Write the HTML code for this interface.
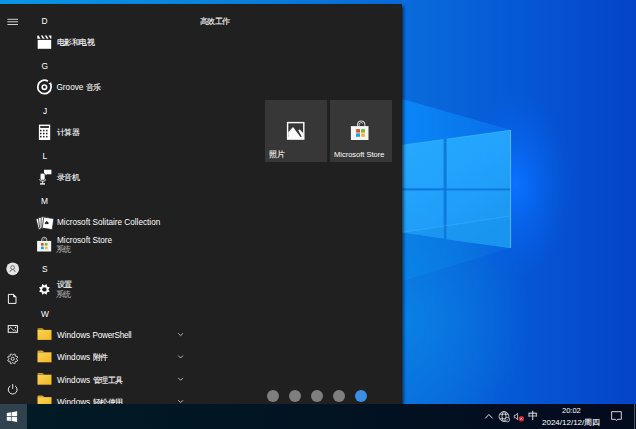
<!DOCTYPE html>
<html><head><meta charset="utf-8">
<style>
*{margin:0;padding:0;box-sizing:border-box}
html,body{width:636px;height:429px;overflow:hidden;background:#0a5ad4}
body{position:relative;font-family:"Liberation Sans",sans-serif;color:#fff}
.abs{position:absolute}
#wall{position:absolute;left:0;top:0;width:636px;height:404px}
#menu{position:absolute;left:0;top:4px;width:402px;height:400px;background:#202020;box-shadow:1.5px 1.5px 3px rgba(0,12,30,0.75)}
.t{position:absolute;white-space:nowrap;font-size:8.2px;line-height:10px;color:#fff}
.h{position:absolute;white-space:nowrap;font-size:8.4px;line-height:10px;color:#fff}
.c{font-size:8px;letter-spacing:-0.4px;-webkit-text-stroke:0.1px currentColor}
.sub{color:#a8a8a8}
.tile{position:absolute;background:#373737;width:63px;height:62px;top:99.5px}
.dot{position:absolute;width:12px;height:12px;border-radius:50%;background:#7f7f7f;top:390px}
#taskbar{position:absolute;left:0;top:404px;width:636px;height:25px;background:linear-gradient(to right,#011b26,#030b1e)}
svg{position:absolute;overflow:visible}
</style></head><body>

<svg id="wall" width="636" height="404" viewBox="0 0 636 404">
  <defs>
    <linearGradient id="bg" x1="402" y1="0" x2="636" y2="0" gradientUnits="userSpaceOnUse">
      <stop offset="0" stop-color="#0a6cdc"/>
      <stop offset="0.45" stop-color="#065ad6"/>
      <stop offset="1" stop-color="#0544c8"/>
    </linearGradient>
    <linearGradient id="strip" x1="0" y1="0" x2="402" y2="0" gradientUnits="userSpaceOnUse">
      <stop offset="0" stop-color="#0a96e4"/>
      <stop offset="0.6" stop-color="#0a80dc"/>
      <stop offset="1" stop-color="#0868d8"/>
    </linearGradient>
    <radialGradient id="leftlight" cx="400" cy="320" r="130" gradientUnits="userSpaceOnUse">
      <stop offset="0" stop-color="#0a84e6" stop-opacity="0.85"/>
      <stop offset="1" stop-color="#0a84e6" stop-opacity="0"/>
    </radialGradient>
    <radialGradient id="glow" cx="0" cy="0" r="1" gradientUnits="userSpaceOnUse" gradientTransform="translate(516 185) scale(55 95)">
      <stop offset="0" stop-color="#0a72ff" stop-opacity="1"/>
      <stop offset="0.4" stop-color="#0868f4" stop-opacity="0.7"/>
      <stop offset="1" stop-color="#0560e8" stop-opacity="0"/>
    </radialGradient>
    <linearGradient id="beamU" x1="402" y1="0" x2="511" y2="0" gradientUnits="userSpaceOnUse">
      <stop offset="0" stop-color="#0a8cff" stop-opacity="0.8"/>
      <stop offset="1" stop-color="#0a8cff" stop-opacity="0.35"/>
    </linearGradient>
    <linearGradient id="beamL" x1="402" y1="0" x2="511" y2="0" gradientUnits="userSpaceOnUse">
      <stop offset="0" stop-color="#0a8aea" stop-opacity="0.55"/>
      <stop offset="1" stop-color="#0a8aea" stop-opacity="0.15"/>
    </linearGradient>
    <linearGradient id="pane" x1="402" y1="130" x2="470" y2="250" gradientUnits="userSpaceOnUse">
      <stop offset="0" stop-color="#28aafe"/>
      <stop offset="0.5" stop-color="#22a2fc"/>
      <stop offset="1" stop-color="#1c96f2"/>
    </linearGradient>
  </defs>
  <rect x="0" y="0" width="636" height="404" fill="url(#bg)"/>
  <rect x="0" y="0" width="402" height="4" fill="url(#strip)"/>
  <rect x="402" y="0" width="234" height="404" fill="url(#leftlight)"/>
  <rect x="402" y="0" width="234" height="404" fill="url(#glow)"/>
  <polygon points="402,99 510.6,130 402,145" fill="url(#beamU)"/>
  <polygon points="402,232.6 510.3,248 402,281" fill="url(#beamL)"/>
  <polygon points="402,145 510.6,130 510.6,248 402,232.6" fill="#0e7ade"/>
  <polygon points="402,145 443.6,139.3 443.6,188.2 402,188.2" fill="url(#pane)"/>
  <polygon points="446.6,138.9 510.6,130 510.6,188.6 446.6,188.6" fill="url(#pane)"/>
  <polygon points="402,190.6 443.6,190.6 443.6,238.6 402,232.6" fill="url(#pane)"/>
  <polygon points="446.6,190.6 510.6,190.6 510.6,248 446.6,239.2" fill="url(#pane)"/>
  <polygon points="402,232.6 443.6,226.2 443.6,238.6" fill="#1894ee" opacity="0.7"/>
  <polygon points="446.6,225.7 510.6,215.9 510.6,248 446.6,239.2" fill="#1894ee" opacity="0.6"/>
  <line x1="402" y1="232.4" x2="510.6" y2="215.9" stroke="#3cb8ff" stroke-width="0.8" opacity="0.6"/>
  <polyline points="510.6,130 510.6,248" stroke="#7fd6ff" stroke-width="1" fill="none" opacity="0.6"/>
  <line x1="446.6" y1="139" x2="510.6" y2="130.2" stroke="#5cc8ff" stroke-width="0.7" opacity="0.5"/>
  <line x1="402" y1="145" x2="443.6" y2="139.4" stroke="#5cc8ff" stroke-width="0.7" opacity="0.4"/>
</svg>

<div id="menu"></div>
<div class="tile" style="left:264.5px;width:62.7px"></div>
<div class="tile" style="left:329.5px;width:62.5px"></div>

<!-- all icons in one page-coordinate svg -->
<svg class="abs" style="left:0;top:0" width="636" height="429" viewBox="0 0 636 429">
  <!-- hamburger -->
  <g stroke="#f0f0f0" stroke-width="0.85">
    <line x1="7.4" y1="19.3" x2="18" y2="19.3"/>
    <line x1="7.4" y1="21.8" x2="18" y2="21.8"/>
    <line x1="7.4" y1="24.5" x2="18" y2="24.5"/>
  </g>
  <!-- film -->
  <rect x="37.7" y="39.9" width="13.5" height="8.9" fill="#fff"/>
  <g fill="#fff">
    <polygon points="37.3,35.4 38.6,35.4 40.6,38.8 37.3,38.8"/>
    <polygon points="40.8,35.4 42.6,35.4 44.6,38.8 42.8,38.8"/>
    <polygon points="44.7,35.4 46.5,35.4 48.5,38.8 46.7,38.8"/>
    <polygon points="48.6,35.4 51.4,35.4 51.4,38.8 50.6,38.8"/>
  </g>
  <!-- groove -->
  <path d="M 47.9 81.2 A 6.7 6.7 0 1 0 50.6 84.2" stroke="#fff" stroke-width="1.7" fill="none"/>
  <polygon points="48.4,83.6 51.2,82.2 51.6,85.6" fill="#fff"/>
  <circle cx="44.4" cy="87.2" r="2.2" stroke="#fff" stroke-width="1.6" fill="none"/>
  <!-- calculator -->
  <rect x="38.9" y="124.6" width="11.3" height="15.4" fill="#fff"/>
  <rect x="40.2" y="126.1" width="8.7" height="1.8" fill="#202020"/>
  <g fill="#202020">
    <rect x="40" y="129.8" width="1.5" height="1.5"/><rect x="43" y="129.8" width="1.5" height="1.5"/><rect x="46" y="129.8" width="1.5" height="1.5"/>
    <rect x="40" y="132.8" width="1.5" height="1.5"/><rect x="43" y="132.8" width="1.5" height="1.5"/><rect x="46" y="132.8" width="1.5" height="1.5"/>
    <rect x="40" y="135.9" width="1.5" height="1.5"/><rect x="43" y="135.9" width="1.5" height="1.5"/><rect x="46" y="135.9" width="1.5" height="1.5"/>
  </g>
  <!-- voice recorder -->
  <path d="M44 169.8 H51.4 V174.2 H46.8 L45.6 175.4 V174.2 H44 Z" fill="#fff"/>
  <rect x="40.2" y="173.2" width="4.8" height="7" rx="1.6" fill="#fff" stroke="#202020" stroke-width="0.6"/>
  <path d="M39.6 179.2 Q39.6 181.4 42.6 181.4 Q45.6 181.4 45.6 179.2" stroke="#fff" stroke-width="0.8" fill="none"/>
  <rect x="42.2" y="181.2" width="0.9" height="2.2" fill="#fff"/>
  <rect x="40" y="183.2" width="5" height="1.4" fill="#fff"/>
  <!-- solitaire -->
  <g stroke="#202020" stroke-width="0.75" fill="#fff" stroke-linejoin="round">
    <rect x="40" y="217.4" width="7.6" height="11" rx="0.8" transform="rotate(-15 44 234)"/>
    <rect x="40.4" y="217.1" width="7.6" height="11" rx="0.8" transform="rotate(-7 44 234)"/>
    <rect x="40.9" y="216.9" width="7.6" height="11" rx="0.8" transform="rotate(1 44 234)"/>
    <rect x="41.4" y="217.3" width="10.2" height="11.2" rx="0.8" transform="rotate(8 44 234)"/>
  </g>
  <path d="M46.8 220.9 C45.6 222.1 44.4 222.5 45 223.7 C45.5 224.5 46.4 224.1 46.8 223.7 C47.2 224.1 48.1 224.5 48.6 223.7 C49.2 222.5 48 222.1 46.8 220.9 Z" fill="#202020"/>
  <!-- store (list) -->
  <g>
    <path d="M41.6 241.2 V239.8 A2.6 2.6 0 0 1 46.8 239.8 V241.2" stroke="#c4c4c4" stroke-width="0.9" fill="none"/>
    <path d="M43 240.6 A1.5 1.5 0 0 1 45.6 239.2" stroke="#c4c4c4" stroke-width="0.7" fill="none"/>
    <rect x="37.1" y="240.9" width="14.1" height="10.6" fill="#f4f4f4"/>
    <rect x="41" y="243" width="2.7" height="2.6" fill="#e4502c"/>
    <rect x="44.8" y="243" width="2.7" height="2.6" fill="#7cb42a"/>
    <rect x="41" y="246.6" width="2.7" height="2.6" fill="#14a0e4"/>
    <rect x="44.8" y="246.6" width="2.7" height="2.6" fill="#f4b92a"/>
  </g>
  <!-- settings gear (list) -->
  <polygon fill="#fff" points="46.62,284.04 47.16,286.64 49.76,287.18 48.30,289.40 49.76,291.62 47.16,292.16 46.62,294.76 44.40,293.30 42.18,294.76 41.64,292.16 39.04,291.62 40.50,289.40 39.04,287.18 41.64,286.64 42.18,284.04 44.40,285.50"/>
  <circle cx="44.4" cy="289.4" r="2.2" fill="#202020"/>
  <!-- folders -->
  <g><defs><linearGradient id="fold" x1="0" y1="0" x2="1" y2="1"><stop offset="0" stop-color="#fbd45a"/><stop offset="1" stop-color="#f2b820"/></linearGradient></defs><path d="M37.5 329.1 Q37.5 328.2 38.4 328.2 H42.2 Q42.8 328.2 43.3 328.8 L44.2 329.8 H37.5 Z" fill="#dca226"/><rect x="37.5" y="329.9" width="14" height="10" fill="url(#fold)"/><path d="M37.5 351.5 Q37.5 350.6 38.4 350.6 H42.2 Q42.8 350.6 43.3 351.2 L44.2 352.2 H37.5 Z" fill="#dca226"/><rect x="37.5" y="352.3" width="14" height="10" fill="url(#fold)"/><path d="M37.5 373.9 Q37.5 373.0 38.4 373.0 H42.2 Q42.8 373.0 43.3 373.6 L44.2 374.6 H37.5 Z" fill="#dca226"/><rect x="37.5" y="374.7" width="14" height="10" fill="url(#fold)"/><path d="M37.5 396.3 Q37.5 395.4 38.4 395.4 H42.2 Q42.8 395.4 43.3 396.0 L44.2 397.0 H37.5 Z" fill="#dca226"/><rect x="37.5" y="397.1" width="14" height="10" fill="url(#fold)"/></g>
  <!-- chevrons -->
  <g stroke="#c8c8c8" stroke-width="0.9" fill="none">
    <polyline points="178.2,333.3 180.6,335.7 183,333.3"/>
    <polyline points="178.2,355.6 180.6,358 183,355.6"/>
    <polyline points="178.2,377.9 180.6,380.3 183,377.9"/>
    <polyline points="178.2,400.2 180.6,402.6 183,400.2"/>
  </g>
  <!-- rail: avatar -->
  <circle cx="12.7" cy="268.8" r="6.4" fill="#e4e4e4"/>
  <circle cx="12.6" cy="267.5" r="1.9" stroke="#555" stroke-width="0.75" fill="none"/>
  <path d="M9.9 272 Q10.4 269.6 12.6 269.6 Q14.8 269.6 15.3 272" stroke="#555" stroke-width="0.75" fill="none"/>
  <!-- rail: document -->
  <path d="M8.4 294.4 H13.5 L16 296.9 V303.4 H8.4 Z" stroke="#fff" stroke-width="0.95" fill="none" stroke-linejoin="miter"/>
  <path d="M13.5 294.4 V296.9 H16 Z" stroke="#fff" stroke-width="0.6" fill="#fff"/>
  <!-- rail: picture -->
  <rect x="8.2" y="325.6" width="9.2" height="6.7" stroke="#fff" stroke-width="0.95" fill="none"/>
  <polyline points="8.4,329.8 10.6,327.5 13.9,330.6" stroke="#fff" stroke-width="0.8" fill="none"/>
  <polyline points="14.2,329.3 16.2,331.6" stroke="#fff" stroke-width="0.8" fill="none"/>
  <circle cx="15.5" cy="327.4" r="0.6" fill="#fff"/>
  <!-- rail: gear -->
  <path stroke="#fff" stroke-width="0.9" fill="none" d="M16.45 358.80 L16.65 359.19 L17.11 359.68 L17.51 360.26 L17.55 360.81 L17.14 361.17 L16.44 361.30 L15.77 361.32 L15.35 361.45 L15.22 361.87 L15.20 362.54 L15.07 363.24 L14.71 363.65 L14.16 363.61 L13.58 363.21 L13.09 362.75 L12.70 362.55 L12.31 362.75 L11.82 363.21 L11.24 363.61 L10.69 363.65 L10.33 363.24 L10.20 362.54 L10.18 361.87 L10.05 361.45 L9.63 361.32 L8.96 361.30 L8.26 361.17 L7.85 360.81 L7.89 360.26 L8.29 359.68 L8.75 359.19 L8.95 358.80 L8.75 358.41 L8.29 357.92 L7.89 357.34 L7.85 356.79 L8.26 356.43 L8.96 356.30 L9.63 356.28 L10.05 356.15 L10.18 355.73 L10.20 355.06 L10.33 354.36 L10.69 353.95 L11.24 353.99 L11.82 354.39 L12.31 354.85 L12.70 355.05 L13.09 354.85 L13.58 354.39 L14.16 353.99 L14.71 353.95 L15.07 354.36 L15.20 355.06 L15.22 355.73 L15.35 356.15 L15.77 356.28 L16.44 356.30 L17.14 356.43 L17.55 356.79 L17.51 357.34 L17.11 357.92 L16.65 358.41 L16.45 358.80 Z"/>
  <circle cx="12.7" cy="358.8" r="1.6" stroke="#fff" stroke-width="0.8" fill="none"/>
  <!-- rail: power -->
  <path d="M10.3 385.9 A4.4 4.4 0 1 0 15.1 385.9" stroke="#fff" stroke-width="0.9" fill="none"/>
  <line x1="12.7" y1="384.1" x2="12.7" y2="388.9" stroke="#fff" stroke-width="0.9"/>
  <!-- photo tile icon -->
  <rect x="286.9" y="121.9" width="17.6" height="17.9" fill="#fff"/>
  <rect x="288.3" y="123.3" width="14.8" height="13.6" fill="#373737"/>
  <polygon points="288.3,132.2 293,126.9 300.4,136.9 288.3,136.9" fill="#fff"/>
  <polygon points="298.4,130.5 299.5,129.2 303.1,133 303.1,136.9 301.9,136.9" fill="#fff"/>
  <!-- store tile icon -->
  <g>
    <path d="M357.6 126.5 V124.6 A3.6 3.6 0 0 1 364.8 124.6 V126.5" stroke="#d0d0d0" stroke-width="1.1" fill="none"/>
    <path d="M359.4 125.8 A2 2 0 0 1 363 123.6" stroke="#d0d0d0" stroke-width="0.9" fill="none"/>
    <rect x="350.9" y="126.1" width="17.6" height="13.9" fill="#f6f6f6"/>
    <rect x="356.1" y="129.1" width="3.9" height="3.5" fill="#e4502c"/>
    <rect x="361.1" y="129.1" width="3.8" height="3.5" fill="#7cb42a"/>
    <rect x="356.1" y="133.4" width="3.9" height="3.4" fill="#14a0e4"/>
    <rect x="361.1" y="133.4" width="3.8" height="3.4" fill="#f4b92a"/>
  </g>
</svg>

<!-- list headers & items: absolute page coordinates -->
<div class="h" style="left:41.5px;top:16px">D</div>
<div class="t c" style="left:56.5px;top:37.5px">电影和电视</div>
<div class="h" style="left:41.5px;top:61px">G</div>
<div class="t" style="left:56.5px;top:83px">Groove <span class="c">音乐</span></div>
<div class="h" style="left:43px;top:106px">J</div>
<div class="t c" style="left:56.5px;top:127.5px">计算器</div>
<div class="h" style="left:42.5px;top:151px">L</div>
<div class="t c" style="left:56.5px;top:173px">录音机</div>
<div class="h" style="left:41px;top:196px">M</div>
<div class="t" style="left:57px;top:217.5px">Microsoft Solitaire Collection</div>
<div class="t" style="left:57px;top:236px">Microsoft Store</div>
<div class="t sub c" style="left:55.5px;top:245px">系统</div>
<div class="h" style="left:42px;top:264px">S</div>
<div class="t c" style="left:56.5px;top:280px">设置</div>
<div class="t sub c" style="left:55.5px;top:290px">系统</div>
<div class="h" style="left:41px;top:309px">W</div>
<div class="t" style="left:57px;top:330.7px">Windows <span style="letter-spacing:-0.25px">PowerShell</span></div>
<div class="t" style="left:57px;top:353px">Windows <span class="c">附件</span></div>
<div class="t" style="left:57px;top:375.7px">Windows <span class="c">管理工具</span></div>
<div class="t" style="left:57px;top:398.2px">Windows <span class="c">轻松使用</span></div>

<!-- group title -->
<div class="t c" style="left:199.5px;top:16.5px">高效工作</div>



<div class="t c" style="left:269px;top:149.5px">照片</div>
<div class="t" style="left:334px;top:149.5px;font-size:7.5px">Microsoft Store</div>

<!-- dots -->
<div class="dot" style="left:267px"></div>
<div class="dot" style="left:289px"></div>
<div class="dot" style="left:311px"></div>
<div class="dot" style="left:333px"></div>
<div class="dot" style="left:355px;background:#3a8ee8"></div>

<div id="taskbar">
  <div class="abs" style="left:0;top:0;width:27px;height:25px;background:#2f424e"></div>
</div>

<svg class="abs" style="left:0;top:0" width="636" height="429" viewBox="0 0 636 429">
  <!-- windows logo -->
  <polygon points="6.8,412.9 10.9,412.3 10.9,416.1 6.8,416.1" fill="#fff"/>
  <polygon points="11.6,412.2 17.1,411.2 17.1,416.1 11.6,416.1" fill="#fff"/>
  <polygon points="6.8,416.8 10.9,416.8 10.9,420.9 6.8,420.4" fill="#fff"/>
  <polygon points="11.6,416.8 17.1,416.8 17.1,421.9 11.6,421" fill="#fff"/>
  <!-- tray chevron -->
  <polyline points="485.2,418.4 488.9,414.5 492.6,418.4" stroke="#e0e0e0" stroke-width="1" fill="none"/>
  <!-- globe -->
  <g stroke="#e4e4e4" stroke-width="0.85" fill="none">
    <circle cx="504" cy="416.5" r="4.9"/>
    <ellipse cx="504" cy="416.5" rx="2" ry="4.9"/>
    <line x1="500" y1="414.2" x2="508" y2="414.2"/>
    <line x1="500" y1="418.8" x2="508" y2="418.8"/>
  </g>
  <circle cx="507.3" cy="419.6" r="2.3" fill="#030f20" stroke="#e4e4e4" stroke-width="0.75"/>
  <polyline points="506.3,419.7 507.1,420.4 508.3,418.9" stroke="#e4e4e4" stroke-width="0.6" fill="none"/>
  <!-- speaker -->
  <path d="M514.3 415.2 H515.6 L517.6 413.3 V419.7 L515.6 417.8 H514.3 Z" stroke="#e0e0e0" stroke-width="0.8" fill="none"/>
  <circle cx="521.3" cy="418.7" r="2.8" fill="#c8262e"/>
  <g stroke="#fff" stroke-width="0.6"><line x1="520.2" y1="417.6" x2="522.4" y2="419.8"/><line x1="522.4" y1="417.6" x2="520.2" y2="419.8"/></g>
  <!-- notification -->
  <path d="M611.6 411.7 H621.3 V419.3 H617.6 L616.5 420.7 L615.4 419.3 H611.6 Z" stroke="#e8e8e8" stroke-width="0.9" fill="none"/>
  <rect x="634" y="404" width="1" height="25" fill="#4a5560"/>
</svg>

<div class="t" style="left:562px;top:406px;font-size:7.5px">20:02</div>
<div class="t" style="left:542px;top:417.6px;font-size:8px">2024/12/12/<span class="c">周四</span></div>
<div class="t" style="left:528px;top:410.5px;font-size:10px">中</div>


</body></html>
